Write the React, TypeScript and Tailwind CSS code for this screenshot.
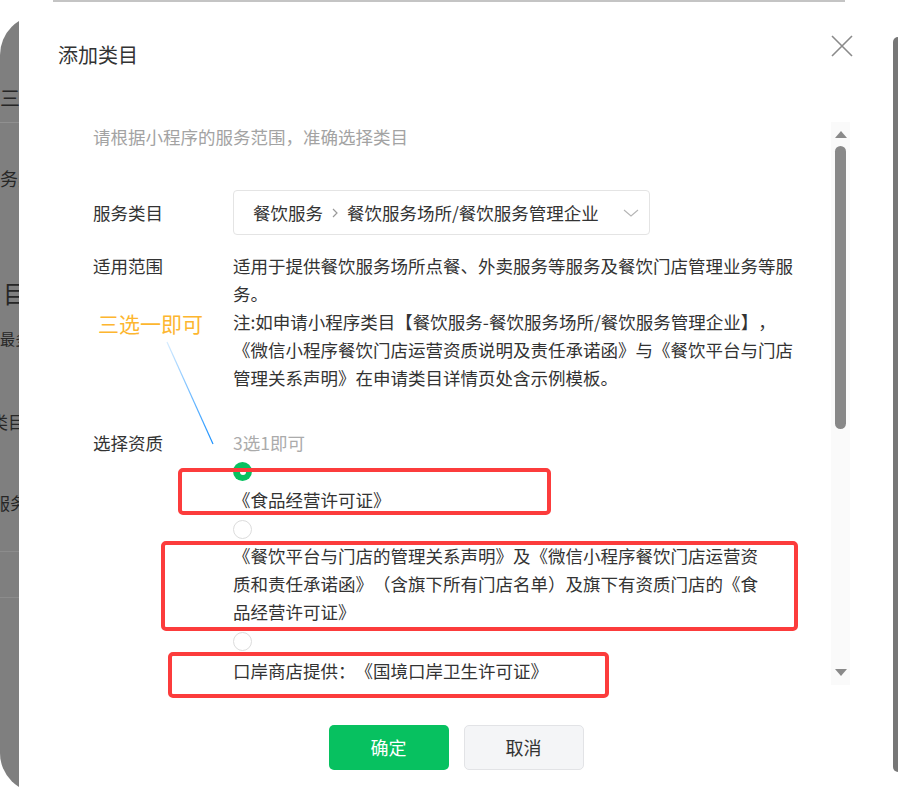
import React from 'react'

const font = { fontFamily: '"Noto Sans CJK SC", "Noto Sans", sans-serif' }

const Radio = ({ checked }: { checked?: boolean }) => {
  if (checked) {
    return (
      <div className="w-[19px] h-[19px] rounded-full bg-[#07c160] flex items-center justify-center">
        <div className="w-[6px] h-[6px] rounded-full bg-white" />
      </div>
    )
  }
  return <div className="w-[19px] h-[19px] rounded-full border border-[#dcdcdc] bg-white" />
}

const BackdropLeft = () => (
  <div className="w-[19px] shrink-0 overflow-hidden bg-white pt-[15px]">
    <div className="w-[60px] h-[778px] bg-[#7f7f7f] rounded-l-[40px] flex flex-col text-[#262626] whitespace-nowrap">
      <div className="mt-[73px] text-[20px] leading-[20px]">三</div>
      <div className="mt-[14px] h-px bg-[#909090]" />
      <div className="mt-[45px] text-[18px] leading-[20px]">务类</div>
      <div className="mt-[93px] ml-[3px] text-[24px] leading-[24px]">目</div>
      <div className="mt-[26px] text-[15px] leading-[16px]">最多</div>
      <div className="mt-[66px] -ml-[9px] text-[17px] leading-[18px]">类目</div>
      <div className="mt-[63px] -ml-[7px] text-[17px] leading-[18px]">服务</div>
      <div className="mt-[39px] h-px bg-[#8c8c8c]" />
      <div className="mt-[45px] h-px bg-[#8c8c8c]" />
    </div>
  </div>
)

const BackdropRight = () => (
  <div className="w-[5px] shrink-0 bg-white pt-[37px]">
    <div className="w-[5px] h-[735px] bg-[#777777] rounded-l-[5px]" />
  </div>
)

const FakeScrollbar = () => (
  <div className="w-[19px] h-[563px] bg-[#fafafa] flex flex-col items-center">
    <div className="mt-[9px] w-0 h-0 border-l-[6px] border-r-[6px] border-b-[7px] border-l-transparent border-r-transparent border-b-[#8a8a8a]" />
    <div className="mt-[8px] w-[11px] h-[283px] rounded-full bg-[#888888]" />
    <div className="flex-1" />
    <div className="mb-[9px] w-0 h-0 border-l-[6px] border-r-[6px] border-t-[7px] border-l-transparent border-r-transparent border-t-[#8a8a8a]" />
  </div>
)

const App = () => {
  return (
    <div className="w-[898px] h-[810px] flex bg-white overflow-hidden [text-spacing-trim:space-all]" style={font}>
      <BackdropLeft />
      <div className="flex-1 bg-white flex flex-col">
        <div className="ml-[34px] w-[792px] h-[2px] bg-[#c4c4c4]" />
        <div className="mt-[39px] flex items-start justify-between pl-[39px] pr-[40px]">
          <p className="text-[20px] leading-[28px] text-[#333]">添加类目</p>
          <svg className="-mt-[6px]" width="22" height="22" viewBox="0 0 22 22" fill="none">
            <path d="M1 1L21 21M21 1L1 21" stroke="#8a8a8a" strokeWidth="1.6" />
          </svg>
        </div>

        <div className="mt-[53px] h-[568px] relative flex">
          <div className="flex-1 pl-[74px] text-[17.5px] leading-[28px] text-[#333]">
            <p className="mt-[1px] text-[#a3a3a3]">请根据小程序的服务范围，准确选择类目</p>

            <div className="mt-[39px] flex items-center">
              <p className="w-[140px] shrink-0">服务类目</p>
              <div className="w-[417px] h-[45px] border border-[#e4e4e4] rounded-[4px] pl-[19px] pr-[9px] flex items-center">
                <span>餐饮服务</span>
                <svg className="mx-[8px]" width="8" height="12" viewBox="0 0 8 12" fill="none">
                  <path d="M2 2L6 6L2 10" stroke="#9a9a9a" strokeWidth="1.2" />
                </svg>
                <span>餐饮服务场所/餐饮服务管理企业</span>
                <div className="flex-1" />
                <svg width="18" height="10" viewBox="0 0 18 10" fill="none">
                  <path d="M2 2L9 8L16 2" stroke="#b5b5b5" strokeWidth="1.1" />
                </svg>
              </div>
            </div>

            <div className="mt-[17px] flex items-start">
              <p className="w-[140px] shrink-0">适用范围</p>
              <div className="whitespace-nowrap">
                <p>适用于提供餐饮服务场所点餐、外卖服务等服务及餐饮门店管理业务等服</p>
                <p>务。</p>
                <p>注:如申请小程序类目【餐饮服务-餐饮服务场所/餐饮服务管理企业】，</p>
                <p>《微信小程序餐饮门店运营资质说明及责任承诺函》与《餐饮平台与门店</p>
                <p>管理关系声明》在申请类目详情页处含示例模板。</p>
              </div>
            </div>

            <div className="mt-[37px] flex items-start">
              <p className="w-[140px] shrink-0">选择资质</p>
              <div className="flex flex-col whitespace-nowrap">
                <p className="text-[#ababab]">3选1即可</p>
                <div className="mt-[5px]"><Radio checked /></div>
                <p className="mt-[5px]">《食品经营许可证》</p>
                <div className="mt-[6px]"><Radio /></div>
                <div className="mt-[3px]">
                  <p>《餐饮平台与门店的管理关系声明》及《微信小程序餐饮门店运营资</p>
                  <p>质和责任承诺函》（含旗下所有门店名单）及旗下有资质门店的《食</p>
                  <p>品经营许可证》</p>
                </div>
                <div className="mt-[6px]"><Radio /></div>
                <p className="mt-[6px]">口岸商店提供：《国境口岸卫生许可证》</p>
              </div>
            </div>
          </div>
          <FakeScrollbar />
          <div className="w-[43px] shrink-0" />

          {/* annotations drawn over the form */}
          <p className="absolute left-[79px] top-[187px] text-[21px] leading-[28px] text-[#fdb62f]">三选一即可</p>
          <svg className="absolute left-[146px] top-[218px]" width="52" height="108" viewBox="0 0 52 108" fill="none">
            <defs>
              <linearGradient id="arr" x1="0" y1="0" x2="1" y2="1">
                <stop offset="0" stopColor="#d6ecff" />
                <stop offset="1" stopColor="#1890ff" />
              </linearGradient>
            </defs>
            <path d="M2 2L48 104" stroke="url(#arr)" strokeWidth="1.2" />
          </svg>
          <div className="absolute left-[159px] top-[346px] w-[373px] h-[47px] border-[4px] border-[#fc3c3c] rounded-[5px]" />
          <div className="absolute left-[142px] top-[419px] w-[637px] h-[90px] border-[4px] border-[#fc3c3c] rounded-[5px]" />
          <div className="absolute left-[149px] top-[530px] w-[441px] h-[46px] border-[4px] border-[#fc3c3c] rounded-[5px]" />
        </div>

        <div className="mt-[35px] flex justify-center gap-[15px] text-[18px]">
          <button className="w-[120px] h-[45px] rounded-[5px] bg-[#07c160] text-white">确定</button>
          <button className="w-[120px] h-[45px] rounded-[5px] bg-[#f4f5f7] border border-[#e2e3e6] text-[#333]">取消</button>
        </div>
      </div>
      <BackdropRight />
    </div>
  )
}

export default App
